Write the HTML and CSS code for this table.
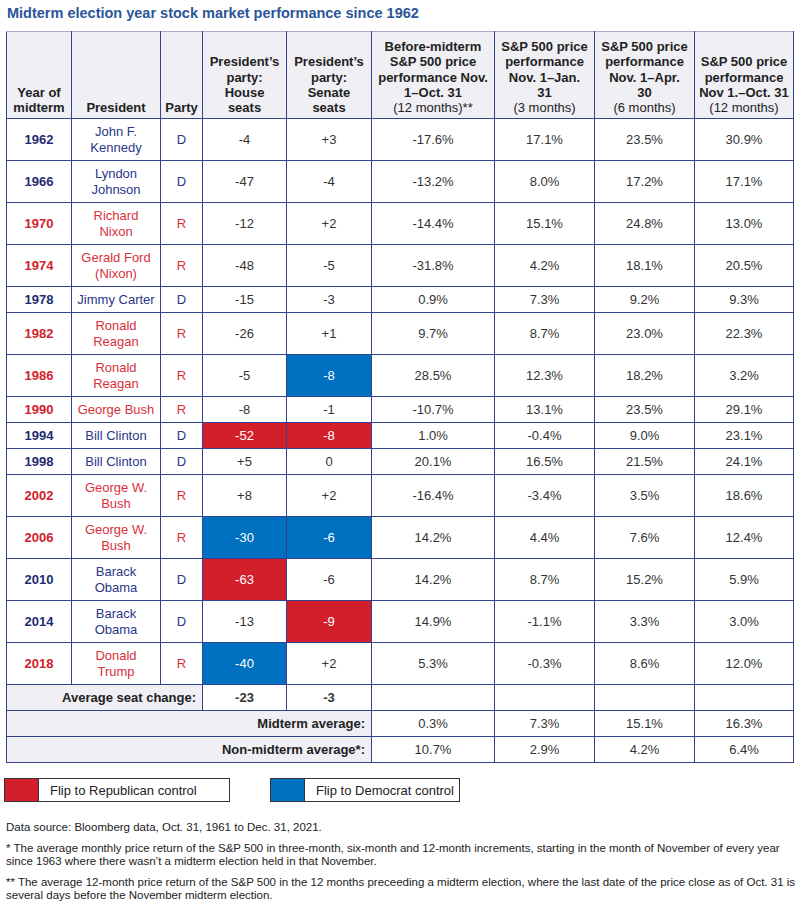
FILE: index.html
```html
<!DOCTYPE html>
<html lang="en">
<head>
<meta charset="utf-8">
<title>Midterm election year stock market performance since 1962</title>
<link rel="stylesheet" href="styles.css">
</head>
<body>
<div class="page">
  <h1 class="title">Midterm election year stock market performance since 1962</h1>
  <table class="perf">
    <colgroup>
      <col class="c1"><col class="c2"><col class="c3"><col class="c4"><col class="c5">
      <col class="c6"><col class="c7"><col class="c8"><col class="c9">
    </colgroup>
    <thead>
      <tr>
        <th>Year of<br>midterm</th>
        <th>President</th>
        <th>Party</th>
        <th>President’s<br>party:<br>House<br>seats</th>
        <th>President’s<br>party:<br>Senate<br>seats</th>
        <th>Before-midterm<br>S&amp;P 500 price<br>performance Nov.<br>1–Oct. 31<br><span class="reg">(12 months)**</span></th>
        <th>S&amp;P 500 price<br>performance<br>Nov. 1–Jan.<br>31<br><span class="reg">(3 months)</span></th>
        <th>S&amp;P 500 price<br>performance<br>Nov. 1–Apr.<br>30<br><span class="reg">(6 months)</span></th>
        <th>S&amp;P 500 price<br>performance<br>Nov 1.–Oct. 31<br><span class="reg">(12 months)</span></th>
      </tr>
    </thead>
    <tbody>
      <tr class="d"><td class="yr">1962</td><td class="nm">John F.<br>Kennedy</td><td class="pt">D</td><td>-4</td><td>+3</td><td>-17.6%</td><td>17.1%</td><td>23.5%</td><td>30.9%</td></tr>
      <tr class="d"><td class="yr">1966</td><td class="nm">Lyndon<br>Johnson</td><td class="pt">D</td><td>-47</td><td>-4</td><td>-13.2%</td><td>8.0%</td><td>17.2%</td><td>17.1%</td></tr>
      <tr class="r"><td class="yr">1970</td><td class="nm">Richard<br>Nixon</td><td class="pt">R</td><td>-12</td><td>+2</td><td>-14.4%</td><td>15.1%</td><td>24.8%</td><td>13.0%</td></tr>
      <tr class="r"><td class="yr">1974</td><td class="nm">Gerald Ford<br>(Nixon)</td><td class="pt">R</td><td>-48</td><td>-5</td><td>-31.8%</td><td>4.2%</td><td>18.1%</td><td>20.5%</td></tr>
      <tr class="d"><td class="yr">1978</td><td class="nm">Jimmy Carter</td><td class="pt">D</td><td>-15</td><td>-3</td><td>0.9%</td><td>7.3%</td><td>9.2%</td><td>9.3%</td></tr>
      <tr class="r"><td class="yr">1982</td><td class="nm">Ronald<br>Reagan</td><td class="pt">R</td><td>-26</td><td>+1</td><td>9.7%</td><td>8.7%</td><td>23.0%</td><td>22.3%</td></tr>
      <tr class="r"><td class="yr">1986</td><td class="nm">Ronald<br>Reagan</td><td class="pt">R</td><td>-5</td><td class="flip-d">-8</td><td>28.5%</td><td>12.3%</td><td>18.2%</td><td>3.2%</td></tr>
      <tr class="r"><td class="yr">1990</td><td class="nm">George Bush</td><td class="pt">R</td><td>-8</td><td>-1</td><td>-10.7%</td><td>13.1%</td><td>23.5%</td><td>29.1%</td></tr>
      <tr class="d"><td class="yr">1994</td><td class="nm">Bill Clinton</td><td class="pt">D</td><td class="flip-r">-52</td><td class="flip-r">-8</td><td>1.0%</td><td>-0.4%</td><td>9.0%</td><td>23.1%</td></tr>
      <tr class="d"><td class="yr">1998</td><td class="nm">Bill Clinton</td><td class="pt">D</td><td>+5</td><td>0</td><td>20.1%</td><td>16.5%</td><td>21.5%</td><td>24.1%</td></tr>
      <tr class="r"><td class="yr">2002</td><td class="nm">George W.<br>Bush</td><td class="pt">R</td><td>+8</td><td>+2</td><td>-16.4%</td><td>-3.4%</td><td>3.5%</td><td>18.6%</td></tr>
      <tr class="r"><td class="yr">2006</td><td class="nm">George W.<br>Bush</td><td class="pt">R</td><td class="flip-d">-30</td><td class="flip-d">-6</td><td>14.2%</td><td>4.4%</td><td>7.6%</td><td>12.4%</td></tr>
      <tr class="d"><td class="yr">2010</td><td class="nm">Barack<br>Obama</td><td class="pt">D</td><td class="flip-r">-63</td><td>-6</td><td>14.2%</td><td>8.7%</td><td>15.2%</td><td>5.9%</td></tr>
      <tr class="d"><td class="yr">2014</td><td class="nm">Barack<br>Obama</td><td class="pt">D</td><td>-13</td><td class="flip-r">-9</td><td>14.9%</td><td>-1.1%</td><td>3.3%</td><td>3.0%</td></tr>
      <tr class="r"><td class="yr">2018</td><td class="nm">Donald<br>Trump</td><td class="pt">R</td><td class="flip-d">-40</td><td>+2</td><td>5.3%</td><td>-0.3%</td><td>8.6%</td><td>12.0%</td></tr>
      <tr class="sum"><td class="lbl" colspan="3">Average seat change:</td><td class="b">-23</td><td class="b">-3</td><td></td><td></td><td></td><td></td></tr>
      <tr class="sum"><td class="lbl" colspan="5">Midterm average:</td><td>0.3%</td><td>7.3%</td><td>15.1%</td><td>16.3%</td></tr>
      <tr class="sum"><td class="lbl" colspan="5">Non-midterm average*:</td><td>10.7%</td><td>2.9%</td><td>4.2%</td><td>6.4%</td></tr>
    </tbody>
  </table>

  <div class="legend">
    <div class="legend-item li-r"><span class="swatch sw-r"></span><span class="legend-label">Flip to Republican control</span></div>
    <div class="legend-item li-d"><span class="swatch sw-d"></span><span class="legend-label">Flip to Democrat control</span></div>
  </div>

  <div class="notes">
    <p>Data source: Bloomberg data, Oct. 31, 1961 to Dec. 31, 2021.</p>
    <p>* The average monthly price return of the S&amp;P 500 in three-month, six-month and 12-month increments, starting in the month of November of every year<br>since 1963 where there wasn’t a midterm election held in that November.</p>
    <p>** The average 12-month price return of the S&amp;P 500 in the 12 months preceeding a midterm election, where the last date of the price close as of Oct. 31 is<br>several days before the November midterm election.</p>
  </div>
</div>
</body>
</html>
```

FILE: styles.css
```css
html, body {
  margin: 0;
  padding: 0;
  background: #ffffff;
}
body {
  font-family: "Liberation Sans", Arial, sans-serif;
  color: #333333;
}
.page {
  padding: 4px 0 0 6px;
}
.title {
  margin: 0 0 9px 1px;
  font-size: 14.5px;
  line-height: 18px;
  font-weight: bold;
  color: #2b5697;
}
.perf {
  border-collapse: collapse;
  table-layout: fixed;
  width: 787px;
  font-size: 13px;
}
.c1 { width: 65px; }
.c2 { width: 89px; }
.c3 { width: 42px; }
.c4 { width: 84px; }
.c5 { width: 85px; }
.c6 { width: 123px; }
.c7 { width: 100px; }
.c8 { width: 100px; }
.c9 { width: 99px; }

.perf th, .perf td {
  border: 1px solid #34418e;
  text-align: center;
  padding: 0 2px;
}
.perf th {
  background: #efeff4;
  color: #222222;
  font-weight: bold;
  vertical-align: bottom;
  line-height: 15.3px;
  padding-top: 7px;
  padding-bottom: 3px;
  border-top-color: #a6add0;
}
.perf th .reg {
  font-weight: normal;
}
.perf td {
  line-height: 16px;
  padding-top: 5px;
  padding-bottom: 4px;
  vertical-align: middle;
  color: #333333;
}
.perf .yr {
  font-weight: bold;
}
.perf tr.d .yr { color: #1f2b72; }
.perf tr.d .nm, .perf tr.d .pt { color: #2a3688; }
.perf tr.r .yr { color: #d3202d; }
.perf tr.r .nm, .perf tr.r .pt { color: #d9303a; }

.perf td.flip-r {
  background: #d31f2c;
  color: #ffffff;
}
.perf td.flip-d {
  background: #0070c0;
  color: #ffffff;
}
.perf tr.sum td.lbl {
  background: #efeff4;
  text-align: right;
  font-weight: bold;
  color: #222222;
  padding-right: 6px;
}
.perf tr.sum td.b {
  font-weight: bold;
  color: #333333;
}

.legend {
  display: flex;
  gap: 40px;
  margin: 15px 0 0 -2px;
}
.legend-item {
  display: flex;
  height: 24px;
  box-sizing: border-box;
  border: 1px solid #333333;
}
.li-r { width: 226px; }
.li-d { width: 190px; }
.swatch {
  width: 33px;
  flex: none;
}
.sw-r { background: #d31f2c; }
.sw-d { background: #0070c0; }
.legend-label {
  display: flex;
  align-items: center;
  padding-left: 11px;
  font-size: 13px;
  color: #222222;
  border-left: 1px solid #333333;
}

.notes {
  margin-top: 19px;
  font-size: 11.5px;
  line-height: 13px;
  color: #222222;
}
.notes p {
  margin: 0 0 8px 0;
  white-space: nowrap;
}
```
